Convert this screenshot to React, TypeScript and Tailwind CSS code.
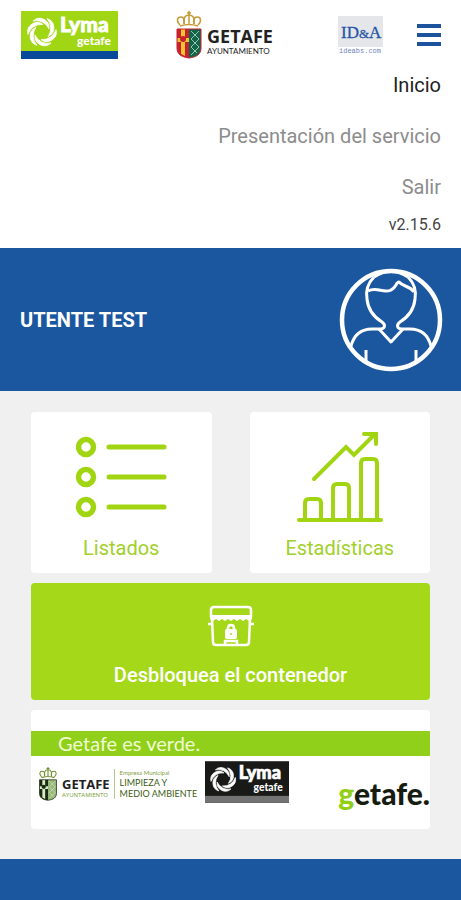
import type { ReactNode } from "react";

const BLADES = [0, 60, 120, 180, 240, 300];

interface LymaLogoProps {
  className: string;
  background: string;
  stripe: string;
}

// Six curved blades turning around an empty centre
function Swirl() {
  return (
    <g transform="translate(21 21)" fill="#fff" stroke="#fff" strokeWidth="0.8" strokeLinejoin="round">
      {BLADES.map((angle) => (
        <path
          key={angle}
          transform={`rotate(${angle})`}
          d="M-9 -11 A9.5 9.5 0 0 1 7 -3 A14 14 0 0 0 -9 -11 Z"
        />
      ))}
    </g>
  );
}

function LymaLogo({ className, background, stripe }: LymaLogoProps) {
  return (
    <svg viewBox="0 0 97 48" className={className} role="img" aria-label="Lyma Getafe">
      <rect width="97" height="48" fill={background} />
      <rect y="40" width="97" height="8" fill={stripe} />
      <Swirl />
      <g fill="#fff" fontFamily="Lato, sans-serif" fontWeight="900">
        <text x="39" y="21" fontSize="21" stroke="#fff" strokeWidth="0.8">Lyma</text>
        <text x="56" y="34" fontSize="12">getafe</text>
      </g>
    </svg>
  );
}

interface CrestProps {
  className: string;
  left: string;
  right: string;
  accent: string;
  crown: string;
}

function Crest({ className, left, right, accent, crown }: CrestProps) {
  return (
    <svg viewBox="0 0 28 48" className={className} aria-hidden="true">
      <g fill="none" stroke={crown} strokeWidth="1.5">
        <path d="M5 14 C1 10 2 6 6 6 C9 6 10 9 9 13" />
        <path d="M9 13 C8 7 10 4 14 4 C18 4 20 7 19 13" />
        <path d="M23 14 C27 10 26 6 22 6 C19 6 18 9 19 13" />
        <path d="M14 0 V13 M12 2 H16 M5 15 Q14 12 23 15" />
      </g>
      <path d="M2 18 H14 V47 C6 46 2 43 2 37 Z" fill={left} />
      <path d="M14 18 H26 V37 C26 43 22 46 14 47 Z" fill={right} />
      <path d="M6 18 H10 V45 L6 43 Z M2 27 H14 V31 H2 Z" fill={accent} />
      <circle cx="8" cy="28" r="3" fill={left} />
      <g fill="none" stroke="#fff" strokeWidth="1" opacity="0.6">
        <path d="M16 20 L24 28 L16 36 L22 42 M24 20 L16 28 L24 36 L16 44" />
      </g>
      <path d="M2 18 H26 V37 C26 43 22 46 14 47 C6 46 2 43 2 37 Z" fill="none" stroke={left} strokeWidth="1" />
    </svg>
  );
}

function IdaLogo() {
  return (
    <svg viewBox="0 0 45 39" className="h-[39px] w-[45px]" role="img" aria-label="ID&A ideabs.com">
      <rect width="45" height="31" fill="#e4e6ea" />
      <text x="3" y="22" fontSize="17" fontFamily="Liberation Serif, serif" fill="#2855a5" stroke="#2855a5" strokeWidth="0.3">
        ID<tspan fontSize="13">&amp;</tspan>A
      </text>
      <text x="1" y="37" fontSize="7" fontFamily="Liberation Mono, monospace" fill="#7086b8">ideabs.com</text>
    </svg>
  );
}

function MenuIcon() {
  return (
    <svg viewBox="0 0 24 22" className="h-[22px] w-6" fill="#1c539c" aria-hidden="true">
      <rect width="24" height="4" />
      <rect y="9" width="24" height="4" />
      <rect y="18" width="24" height="4" />
    </svg>
  );
}

function Avatar() {
  return (
    <svg viewBox="0 0 104 104" className="size-26" fill="none" stroke="#fff" aria-hidden="true">
      <circle cx="52" cy="52" r="49" strokeWidth="4.5" />
      <g strokeWidth="3" strokeLinejoin="round">
        <path d="M35 9 C27 17 27 25 28 31 C29 42 35 49 43 54 C47 57 46 61 41 61 H33 C22 61 15 67 12 78" />
        <path d="M69 9 C77 17 77 25 76 31 C75 42 69 49 61 54 C57 57 58 61 63 61 H71 C82 61 89 67 92 78" />
        <path d="M40 61 L52 74 L64 61" />
        <path d="M29 23 C38 18 44 26 52 22 C57 20 57 14 60 14 C64 19 70 17 75 24" />
        <path d="M35 9 Q52 -2 69 9" />
        <path d="M27 82 V94 M77 82 V94" />
      </g>
    </svg>
  );
}

function ListIcon() {
  return (
    <svg viewBox="0 0 92 82" className="h-[82px] w-[92px]" fill="none" stroke="#a1d511" aria-hidden="true">
      {[11, 41, 71].map((y) => (
        <g key={y}>
          <circle cx="11" cy={y} r="7.5" strokeWidth="5.5" />
          <path d={`M34 ${y} H89`} strokeWidth="5" strokeLinecap="round" />
        </g>
      ))}
    </svg>
  );
}

function ChartIcon() {
  return (
    <svg
      viewBox="0 0 86 92"
      className="h-[92px] w-[86px]"
      fill="none"
      stroke="#a1d511"
      strokeWidth="4"
      strokeLinecap="round"
      strokeLinejoin="round"
      aria-hidden="true"
    >
      <path d="M2 89 H84" />
      <path d="M8 89 V72 Q8 68 12 68 H20 Q24 68 24 72 V89" />
      <path d="M36 89 V57 Q36 53 40 53 H48 Q52 53 52 57 V89" />
      <path d="M64 89 V32 Q64 28 68 28 H76 Q80 28 80 32 V89" />
      <path d="M17 48 L49 16 L57 24 L78 3 M67 3 H79 V13" strokeLinejoin="miter" />
    </svg>
  );
}

function ContainerIcon() {
  return (
    <svg viewBox="0 0 46 42" className="h-[42px] w-[46px]" fill="none" stroke="#fff" strokeWidth="2.5" aria-hidden="true">
      <path d="M3 12 V5 Q3 2 6 2 H40 Q43 2 43 5 V12" />
      <path
        d="M2 10 H44 V14 L41 16 L38 14 L35 16 L32 14 L29 16 L26 14 L23 16 L20 14 L17 16 L14 14 L11 16 L8 14 L5 16 L2 14 Z"
        fill="#fff"
        stroke="none"
      />
      <path d="M4 14 L5 37 Q5 40 8 40 H38 Q41 40 41 37 L42 14 M0 19 H5 M41 19 H46" />
      <path d="M17 40 V36 H29 V40" />
      <rect x="17" y="24" width="12" height="10" rx="2" fill="#fff" stroke="none" />
      <path d="M20 26 V23 Q20 20 23 20 Q26 20 26 23 V26" />
      <circle cx="23" cy="29" r="1" fill="#a5d819" stroke="none" />
    </svg>
  );
}

function Tile({ label, children }: { label: string; children: ReactNode }) {
  return (
    <button type="button" className="flex h-[161px] flex-1 flex-col items-center justify-between rounded bg-white pt-5 pb-[13px]">
      <span className="flex h-[90px] items-center">{children}</span>
      <span className="text-xl leading-6 text-[#a1d02b]">{label}</span>
    </button>
  );
}

export default function App() {
  return (
    <div className="flex min-h-screen flex-col bg-[#f0f0f0] font-[Roboto,sans-serif]">
      <header className="bg-white pb-[11px]">
        <div className="flex items-center justify-between pt-[11px] pr-5 pl-[21px]">
          <LymaLogo className="h-12 w-[97px]" background="#a1d615" stripe="#08499a" />
          <div className="flex items-center gap-1 pr-2">
            <Crest className="h-12 w-7" left="#c7212d" right="#11664a" accent="#f0c52f" crown="#c79a36" />
            <div className="flex flex-col pt-3 font-['Open_Sans',sans-serif] text-[#222]">
              <span className="text-lg leading-5 font-bold">GETAFE</span>
              <span className="font-[Lato,sans-serif] text-[8px] leading-[10px]">AYUNTAMIENTO</span>
            </div>
          </div>
          <div className="flex items-center gap-[34px]">
            <IdaLogo />
            <button type="button" aria-label="Menú">
              <MenuIcon />
            </button>
          </div>
        </div>
        <nav className="flex flex-col items-end gap-[27px] pt-[14px] pr-5 text-xl leading-6">
          <a href="#inicio" className="text-[#222]">Inicio</a>
          <a href="#presentacion" className="text-[#8c8c8c]">Presentación del servicio</a>
          <a href="#salir" className="text-[#8c8c8c]">Salir</a>
        </nav>
        <p className="pt-[14px] pr-5 text-right text-base leading-6 text-[#444]">v2.15.6</p>
      </header>

      <section className="flex h-[143px] items-center justify-between bg-[#1b579e] pr-[18px] pl-5">
        <h1 className="text-xl leading-6 font-bold text-white">UTENTE TEST</h1>
        <Avatar />
      </section>

      <main className="flex flex-col gap-[10px] px-[31px] pt-[21px] pb-[30px]">
        <div className="flex gap-[38px]">
          <Tile label="Listados">
            <ListIcon />
          </Tile>
          <Tile label="Estadísticas">
            <ChartIcon />
          </Tile>
        </div>

        <button type="button" className="flex h-[117px] flex-col items-center justify-between rounded bg-[#a5d819] pt-[22px] pb-[13px]">
          <ContainerIcon />
          <span className="text-xl leading-6 font-medium text-white">Desbloquea el contenedor</span>
        </button>

        <section className="flex h-[119px] flex-col overflow-hidden rounded bg-white pt-[21px]">
          <p className="bg-[#91d01a] pl-[27px] font-[Lato,sans-serif] text-xl leading-[25px] text-[#f0fcd2]">Getafe es verde.</p>
          <div className="flex items-start pt-[5px] pl-[7px]">
            <div className="flex items-center gap-1 pt-[6px]">
              <Crest className="h-[34px] w-5" left="#182c10" right="#98b678" accent="#dce8c8" crown="#6d8c2b" />
              <div className="flex flex-col pt-2 font-['Open_Sans',sans-serif]">
                <span className="text-[13px] leading-[14px] font-bold text-[#222]">GETAFE</span>
                <span className="text-[6px] leading-[8px] text-[#759b30]">AYUNTAMIENTO</span>
              </div>
              <div className="flex flex-col border-l border-[#b3c88c] pl-[5px] font-[Lato,sans-serif] text-[9px] leading-[11px] text-[#405d13]">
                <span className="text-[6px] leading-[8px] text-[#7fa03d]">Empresa Municipal</span>
                <span>LIMPIEZA Y</span>
                <span>MEDIO AMBIENTE</span>
              </div>
            </div>
            <LymaLogo className="ml-2 h-[42px] w-[84px]" background="#191a18" stripe="#737373" />
            <span className="ml-auto pt-4 font-[Lato,sans-serif] text-3xl leading-8 font-black text-[#171c10]">
              <span className="text-[#91cf17]">g</span>etafe.
            </span>
          </div>
        </section>
      </main>

      <footer className="min-h-[41px] flex-1 bg-[#1b579e]" />
    </div>
  );
}
